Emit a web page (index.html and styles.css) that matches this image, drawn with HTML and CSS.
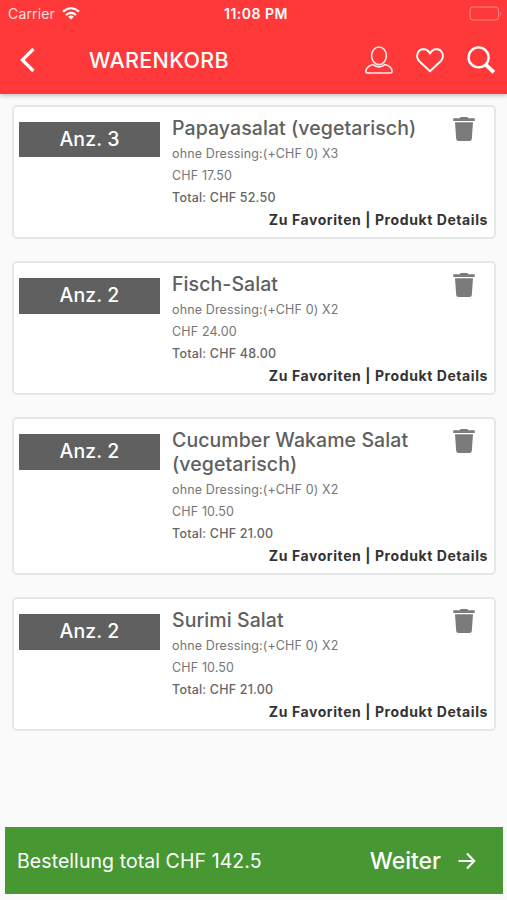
FILE: index.html
```html
<!DOCTYPE html>
<html lang="de">
<head>
<meta charset="utf-8">
<title>Warenkorb</title>
<link rel="stylesheet" href="styles.css">
</head>
<body>
<svg class="defs" width="0" height="0" aria-hidden="true">
  <symbol id="trash" viewBox="0 0 22 26"><path d="M0.3 2.2H6.7L7.7 1H14.3L15.3 2.2H21.7V4.9H0.3ZM2 6.3H20L18.8 23Q18.6 24.9 16.6 24.9H5.4Q3.4 24.9 3.2 23Z" fill="#7b7b7b"/></symbol>
</svg>
<header class="header">
  <div class="status">
    <span class="carrier">Carrier</span>
    <svg class="wifi" width="18" height="13" viewBox="0 0 18 13" fill="none" stroke="#fff" stroke-width="2.2"><path d="M1 4.6Q9-2.2 17 4.6M4 8Q9 3.8 14 8"/><path d="M9 12.6L6.1 9.7Q9 7.5 11.9 9.7Z" fill="#fff" stroke="none"/></svg>
    <span class="time">11:08 PM</span>
    <svg class="battery" width="33" height="15" viewBox="0 0 33 15" fill="none" stroke="#ff8a88"><rect x="1" y="1" width="28.5" height="13" rx="3"/><path d="M31.3 5.2Q33 7.5 31.3 9.8Z" fill="#ff8a88" stroke="none"/></svg>
  </div>
  <nav class="nav">
    <svg class="back" width="16" height="26" viewBox="0 0 16 26" fill="none" stroke="#fff" stroke-width="3.2"><path d="M14.4 2L3.3 13L14.4 24"/></svg>
    <h1 class="heading">WARENKORB</h1>
    <svg class="user" width="28" height="29" viewBox="0 0 28 29" fill="none" stroke="#ffe9e9" stroke-width="1.6"><ellipse cx="14" cy="9.8" rx="7.4" ry="8.8"/><path d="M8.2 18.6C4.5 19.6 0.9 21.4 0.9 25.6Q0.9 27 2.3 27H25.7Q27.1 27 27.1 25.6C27.1 21.4 23.5 19.6 19.8 18.6C16.5 21.6 11.5 21.6 8.2 18.6Z" stroke-linejoin="round"/></svg>
    <svg class="heart" width="28" height="25" viewBox="0 0 28 25" fill="none" stroke="#fff" stroke-width="1.9" stroke-linejoin="round"><path d="M14 23.2L3.1 13C-0.5 9.3 1 1.3 7.4 1.2C10.8 1.1 13 3.5 14 5.6C15 3.5 17.2 1.1 20.6 1.2C27 1.3 28.5 9.3 24.9 13Z"/></svg>
    <svg class="search" width="28" height="28" viewBox="0 0 28 28" fill="none" stroke="#fff"><circle cx="11.6" cy="11.4" r="10" stroke-width="2.4"/><path d="M18.6 18.7L26.8 26.3" stroke-width="3.8"/></svg>
  </nav>
</header>
<main class="cart">
  <article class="card">
    <div class="count">Anz. 3</div>
    <div class="info">
      <h2 class="name">Papayasalat (vegetarisch)</h2>
      <p class="line">ohne Dressing:(+CHF 0) X3</p>
      <p class="line">CHF 17.50</p>
      <p class="line total">Total: CHF 52.50</p>
      <p class="links"><a>Zu Favoriten</a> | <a>Produkt Details</a></p>
    </div>
    <svg class="trash"><use href="#trash"/></svg>
  </article>
  <article class="card">
    <div class="count">Anz. 2</div>
    <div class="info">
      <h2 class="name">Fisch-Salat</h2>
      <p class="line">ohne Dressing:(+CHF 0) X2</p>
      <p class="line">CHF 24.00</p>
      <p class="line total">Total: CHF 48.00</p>
      <p class="links"><a>Zu Favoriten</a> | <a>Produkt Details</a></p>
    </div>
    <svg class="trash"><use href="#trash"/></svg>
  </article>
  <article class="card">
    <div class="count">Anz. 2</div>
    <div class="info">
      <h2 class="name">Cucumber Wakame Salat<br>(vegetarisch)</h2>
      <p class="line">ohne Dressing:(+CHF 0) X2</p>
      <p class="line">CHF 10.50</p>
      <p class="line total">Total: CHF 21.00</p>
      <p class="links"><a>Zu Favoriten</a> | <a>Produkt Details</a></p>
    </div>
    <svg class="trash"><use href="#trash"/></svg>
  </article>
  <article class="card">
    <div class="count">Anz. 2</div>
    <div class="info">
      <h2 class="name">Surimi Salat</h2>
      <p class="line">ohne Dressing:(+CHF 0) X2</p>
      <p class="line">CHF 10.50</p>
      <p class="line total">Total: CHF 21.00</p>
      <p class="links"><a>Zu Favoriten</a> | <a>Produkt Details</a></p>
    </div>
    <svg class="trash"><use href="#trash"/></svg>
  </article>
</main>
<footer class="checkout">
  <span class="sum">Bestellung total CHF 142.5</span>
  <span class="next">Weiter</span>
  <svg class="arrow" width="18" height="18" viewBox="0 0 18 18" fill="none" stroke="#fff" stroke-width="2.1"><path d="M0.5 9H16M9 1.6L16.2 9L9 16.4"/></svg>
</footer>
</body>
</html>
```
FILE: styles.css
```css
* { box-sizing: border-box; }
body {
  margin: 0;
  height: 900px;
  display: flex;
  flex-direction: column;
  background: #fafafa;
  font-family: Inter, "Liberation Sans", sans-serif;
  overflow: hidden;
}
h1, h2, p { margin: 0; font-weight: 500; }
.defs { position: absolute; }
.header {
  height: 94px;
  flex: none;
  background: #ff3939;
  color: #fff;
  box-shadow: 0 1px 5px rgba(0, 0, 0, .3);
}
.status {
  height: 27px;
  display: flex;
  align-items: center;
  padding: 0 5px 0 8px;
}
.carrier { width: 54px; font-size: 14px; color: #ffdede; letter-spacing: .15px; }
.time { margin-left: 144px; font-size: 14px; font-weight: 600; letter-spacing: .5px; }
.battery { margin-left: auto; }
.nav { height: 66px; display: flex; align-items: center; padding: 0 12px 0 19px; }
.heading { margin-left: 54px; font-size: 21.5px; flex: 1; letter-spacing: .3px; }
.heart { margin-left: 23.5px; }
.search { margin-left: 23px; }
.cart { flex: 1; padding: 10.5px 11px 0 12px; }
.card {
  display: flex;
  align-items: flex-start;
  position: relative;
  padding: 10.2px 6px 6.5px 6px;
  margin-bottom: 21.7px;
  border: 2px solid #e6e7e7;
  border-radius: 5px;
  background: #fff;
}
.count {
  width: 141px;
  height: 35.5px;
  margin-top: 5.1px;
  margin-left: -1px;
  flex: none;
  background: #606060;
  color: #fff;
  font-size: 19.5px;
  font-weight: 500;
  line-height: 35.5px;
  text-align: center;
  letter-spacing: .1px;
}
.info { flex: 1; margin-left: 12px; }
.name { font-size: 19.5px; line-height: 23.4px; color: #606060; letter-spacing: .08px; margin-bottom: 2.5px; }
.line { font-size: 12.5px; line-height: 22px; font-weight: 400; color: #757575; letter-spacing: .14px; }
.total { font-weight: 500; color: #666; letter-spacing: .2px; }
.links { font-size: 14px; line-height: 22px; font-weight: 700; color: #333; text-align: right; letter-spacing: .58px; white-space: nowrap; }
.trash { position: absolute; right: 19px; top: 9.2px; width: 22px; height: 26px; }
.checkout {
  height: 67px;
  flex: none;
  display: flex;
  align-items: center;
  margin: 0 4px 6px 5px;
  padding: 0 27px 0 12px;
  background: #479832;
  color: #fff;
}
.sum { font-size: 19.5px; flex: 1; letter-spacing: .07px; }
.next { font-size: 23px; font-weight: 500; }
.arrow { margin-left: 17px; }
```
